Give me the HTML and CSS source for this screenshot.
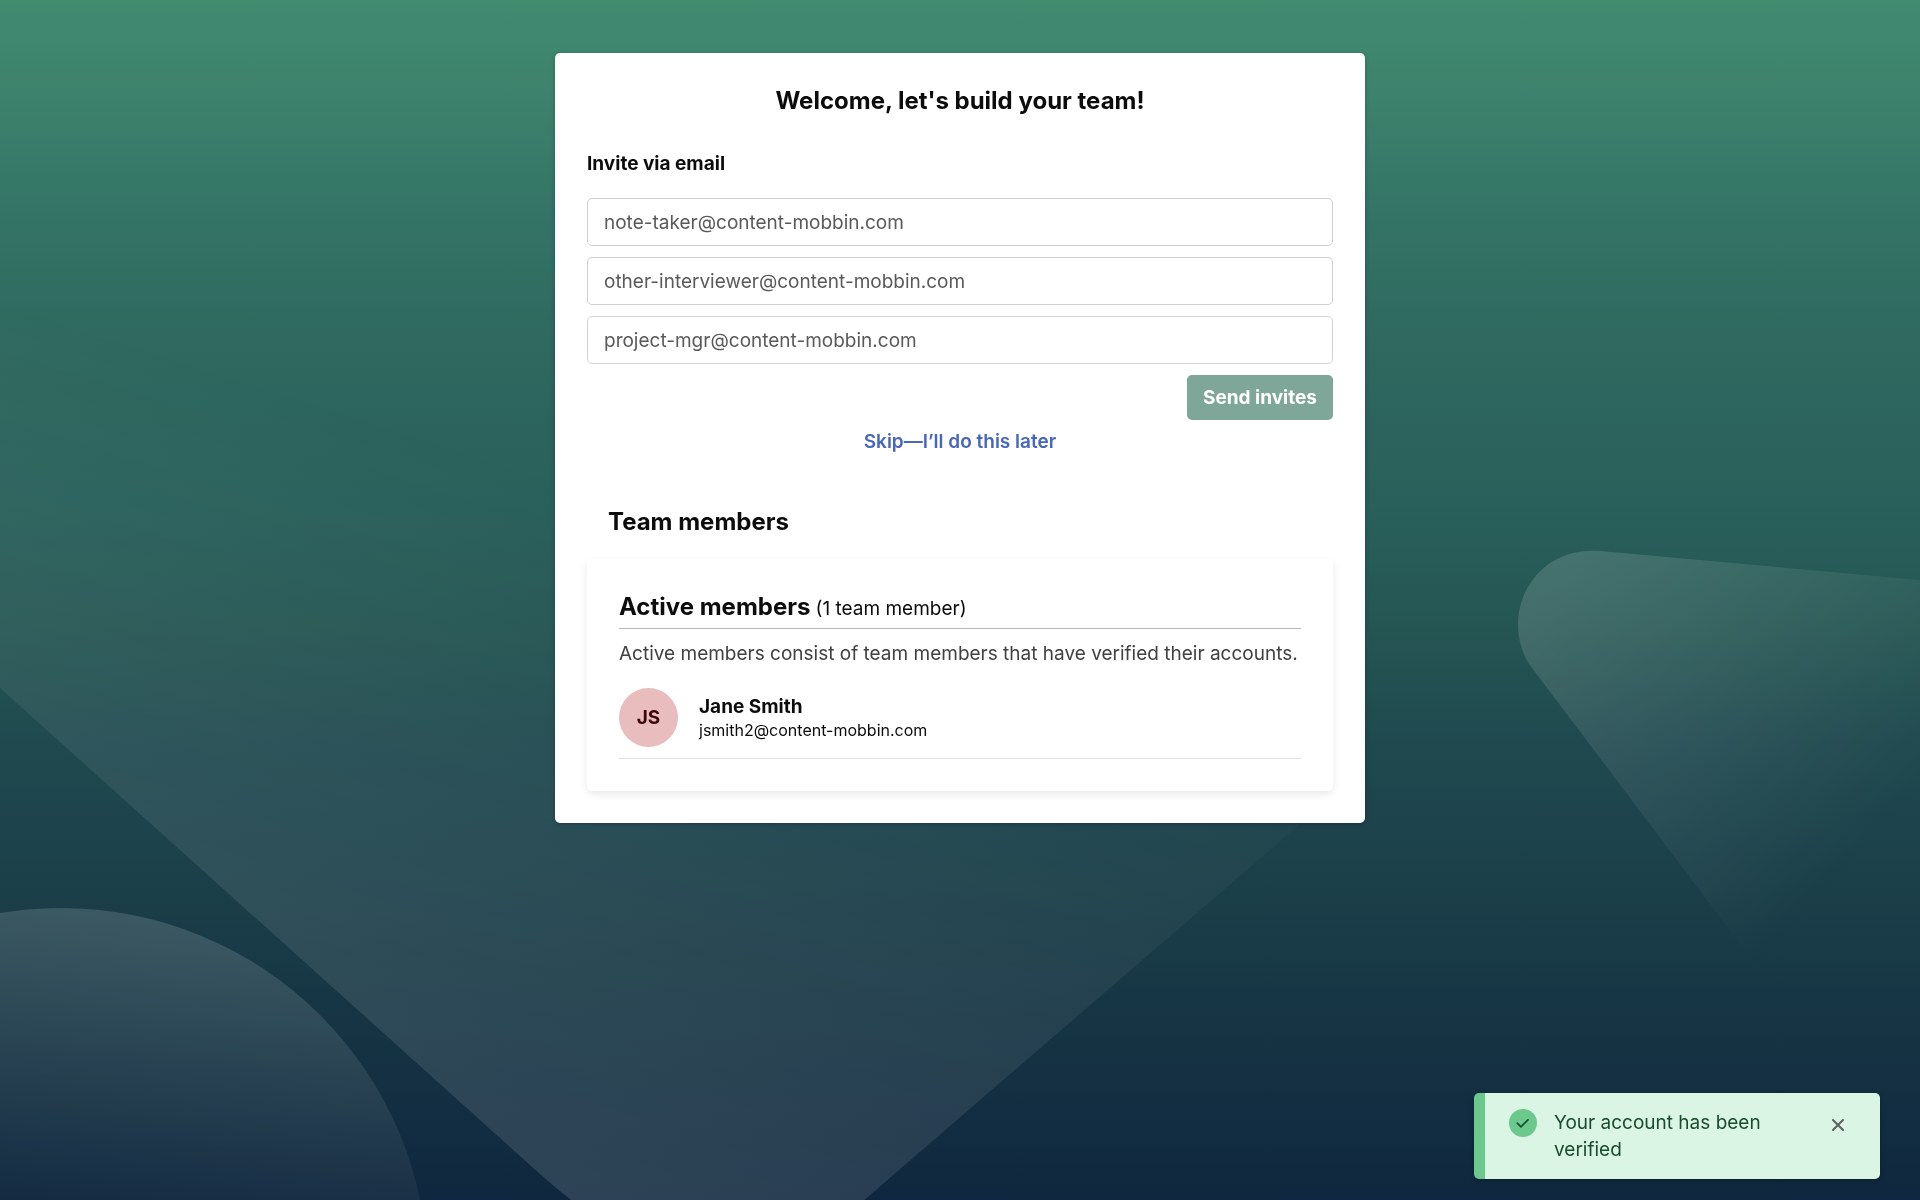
FILE: index.html
```html
<!DOCTYPE html>
<html lang="en">
<head>
<meta charset="utf-8">
<meta name="viewport" content="width=device-width, initial-scale=1">
<title>Build your team</title>
<link rel="stylesheet" href="styles.css">
</head>
<body>
<svg class="backdrop" viewBox="0 0 1920 1200" preserveAspectRatio="xMidYMid slice" aria-hidden="true">
  <defs>
    <linearGradient id="diamond" gradientUnits="userSpaceOnUse" x1="500" y1="1200" x2="716" y2="523">
      <stop offset="0" stop-color="#fff" stop-opacity=".13"/>
      <stop offset="1" stop-color="#fff" stop-opacity="0"/>
    </linearGradient>
    <linearGradient id="circle" gradientUnits="userSpaceOnUse" x1="110" y1="908" x2="61" y2="1260">
      <stop offset="0" stop-color="#fff" stop-opacity=".15"/>
      <stop offset="1" stop-color="#fff" stop-opacity="0"/>
    </linearGradient>
    <linearGradient id="wedge" gradientUnits="userSpaceOnUse" x1="1550" y1="590" x2="1850" y2="870">
      <stop offset="0" stop-color="#fff" stop-opacity=".14"/>
      <stop offset="1" stop-color="#fff" stop-opacity="0"/>
    </linearGradient>
  </defs>
  <path fill="url(#diamond)" d="M0 200V688L540 1174Q714 1330 855 1208L1300 824L1920 288V200Z"/>
  <circle fill="url(#circle)" cx="61" cy="1275" r="367"/>
  <path fill="url(#wedge)" d="M1920 580L1600 551C1546 547 1518 588 1518 624C1518 640 1522 652 1529 664L1790 1010H1920Z"/>
</svg>

<main class="page">
  <section class="panel">
    <h1 class="title">Welcome, let's build your team!</h1>
    <form class="invite">
      <h2 class="invite-heading">Invite via email</h2>
      <input class="field" type="email" aria-label="First email" placeholder="note-taker@content-mobbin.com">
      <input class="field" type="email" aria-label="Second email" placeholder="other-interviewer@content-mobbin.com">
      <input class="field" type="email" aria-label="Third email" placeholder="project-mgr@content-mobbin.com">
      <button class="send" type="submit" disabled>Send invites</button>
    </form>
    <a class="skip" href="#">Skip—I’ll do this later</a>

    <h2 class="team-heading">Team members</h2>
    <section class="members">
      <div class="members-header">
        <h3 class="members-title">Active members</h3>
        <span class="members-count">(1 team member)</span>
      </div>
      <p class="members-note">Active members consist of team members that have verified their accounts.</p>
      <ul class="member-list">
        <li class="member">
          <span class="avatar">JS</span>
          <div class="member-text">
            <span class="member-name">Jane Smith</span>
            <span class="member-email">jsmith2@content-mobbin.com</span>
          </div>
        </li>
      </ul>
    </section>
  </section>
</main>

<div class="toast" role="status">
  <svg class="toast-icon" viewBox="0 0 28 28" aria-hidden="true">
    <circle cx="14" cy="14" r="14" fill="#6bc98d"/>
    <path d="M8.3 14.2L11.9 17.8L19 10.8" fill="none" stroke="#15502f" stroke-width="1.7" stroke-linecap="round" stroke-linejoin="round"/>
  </svg>
  <p class="toast-text">Your account has been verified</p>
  <button class="toast-close" type="button" aria-label="Dismiss">
    <svg class="close-icon" viewBox="0 0 12 12" aria-hidden="true">
      <path d="M1 1L11 11M11 1L1 11" fill="none" stroke="#5c5f5e" stroke-width="2" stroke-linecap="round"/>
    </svg>
  </button>
</div>
</body>
</html>
```
FILE: styles.css
```css
* {
  box-sizing: border-box;
}

body {
  margin: 0;
  min-height: 100vh;
  font-family: Inter, "Liberation Sans", sans-serif;
  font-size: 19px;
  line-height: 27px;
  color: #0c0c0c;
  background: linear-gradient(#418b71 0%, #3d826c 8%, #347567 17%, #2f695f 28%, #29605b 42%, #255653 52%, #1f494f 62%, #1b3f49 74%, #163444 85%, #0f273e 100%) fixed;
}

h1, h2, h3, p, ul {
  margin: 0;
  padding: 0;
}

.backdrop {
  position: fixed;
  inset: 0;
  width: 100%;
  height: 100%;
}

.page {
  position: relative;
  display: flex;
  justify-content: center;
  padding: 53px 24px;
}

.panel {
  display: flex;
  flex-direction: column;
  width: 100%;
  max-width: 810px;
  padding: 32px;
  background: #fff;
  border-radius: 5px;
  box-shadow: 0 1px 4px rgba(0, 0, 0, .25);
}

.title,
.team-heading,
.members-title {
  font-size: 24px;
  line-height: 32px;
  font-weight: 700;
}

.title {
  text-align: center;
}

.invite {
  display: flex;
  flex-direction: column;
  gap: 11px;
}

.invite-heading {
  margin: 33px 0 10px;
  font-size: 19px;
  line-height: 27px;
}

.field {
  width: 100%;
  height: 48px;
  padding: 0 16px;
  border: 1px solid #cfd1d1;
  border-radius: 5px;
  background: #fff;
  font: inherit;
  color: #0c0c0c;
}

.field::placeholder {
  color: #5a5a5a;
  opacity: 1;
}

.send {
  align-self: flex-end;
  height: 45px;
  padding: 0 16px;
  border: 0;
  border-radius: 5px;
  background: #7fa799;
  font: inherit;
  font-weight: 700;
  color: #fff;
}

.skip {
  align-self: center;
  margin-top: 8px;
  font-weight: 600;
  color: #4767bd;
  text-decoration: none;
}

.team-heading {
  margin: 51px 0 21px;
  padding-left: 21px;
}

.members {
  padding: 32px;
  border-radius: 5px;
  box-shadow: 0 3px 8px rgba(0, 0, 0, .09);
}

.members-header {
  display: flex;
  flex-wrap: wrap;
  align-items: baseline;
  gap: 5px;
  padding-bottom: 5px;
  border-bottom: 1px solid #b5b7b7;
}

.members-note {
  margin-top: 11px;
  color: #414141;
}

.member-list {
  list-style: none;
}

.member {
  display: flex;
  align-items: center;
  gap: 21px;
  padding: 21px 0 11px;
  border-bottom: 1px solid #dedfdf;
}

.avatar {
  display: flex;
  align-items: center;
  justify-content: center;
  width: 59px;
  height: 59px;
  border-radius: 50%;
  background: #e9bdbd;
  font-weight: 700;
  color: #3b0708;
}

.member-text {
  display: flex;
  flex-direction: column;
}

.member-name {
  line-height: 24px;
  font-weight: 700;
}

.member-email {
  font-size: 16px;
  line-height: 22px;
}

.toast {
  position: fixed;
  right: 40px;
  bottom: 21px;
  display: flex;
  align-items: flex-start;
  width: 406px;
  padding: 16px 36px 16px 24px;
  border-left: 11px solid #6bc98d;
  border-radius: 5px;
  background: #daf5e4;
  box-shadow: 0 1px 4px rgba(0, 0, 0, .3);
  color: #1b4b2f;
}

.toast-icon {
  flex: none;
  width: 28px;
  height: 28px;
  margin-right: 17px;
}

.toast-text {
  flex: 1;
  padding-right: 48px;
}

.toast-close {
  flex: none;
  display: flex;
  padding: 10px 0;
  border: 0;
  background: none;
}

.close-icon {
  width: 12px;
  height: 12px;
}
```
